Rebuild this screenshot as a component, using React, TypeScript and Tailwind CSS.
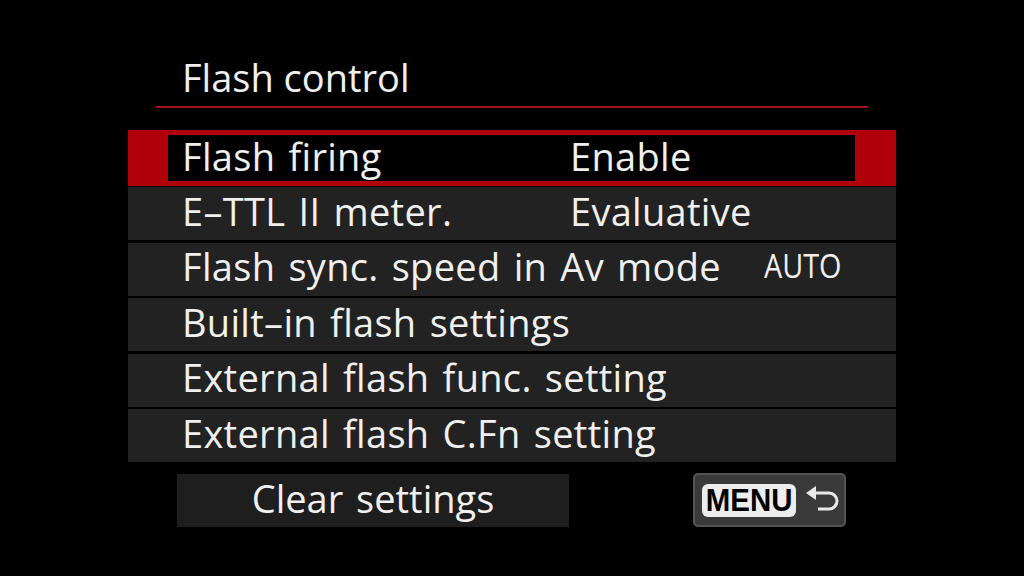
import { ReactNode } from 'react';

interface MenuRow {
    label: string;
    value?: string;
    small?: boolean;
}

const ROWS: MenuRow[] = [
    { label: 'E\u2013TTL II meter.', value: 'Evaluative' },
    { label: 'Flash sync. speed in Av mode', value: 'AUTO', small: true },
    { label: 'Built\u2013in flash settings' },
    { label: 'External flash func. setting' },
    { label: 'External flash C.Fn setting' },
];

const FONT = { fontFamily: '"Open Sans", "Noto Sans", sans-serif' };

const ReturnIcon = () => (
    <svg width="36" height="28" viewBox="0 0 36 28" className="text-[#e8e8e8]">
        <path d="M1 7 L11 0 L11 14 Z" fill="currentColor" />
        <path d="M10 7 H24 a8 8 0 0 1 0 16 H13" fill="none" stroke="currentColor" strokeWidth="3" />
    </svg>
);

const Row = ({ children }: { children: ReactNode }) => (
    <div className="h-[53px] bg-[#222222] flex items-center pl-[54px] pb-[6px] whitespace-nowrap tracking-[0.3px] [word-spacing:3px]">
        {children}
    </div>
);

export default function App() {
    return (
        <div
            className="w-[1024px] h-[576px] bg-black text-[#f0f0f0] text-[38px] leading-none overflow-hidden"
            style={FONT}
        >
            <div className="pt-[58px] pl-[156px] w-[868px]">
                <div className="pl-[26px] pb-[10px]">Flash control</div>
                <div className="h-[2px] bg-[#a3121a]" />
            </div>

            <div className="ml-[128px] w-[768px] mt-[22px] flex flex-col">
                <div className="h-[56px] bg-[#b0000c] flex pl-[40px] py-[5px] pr-[41px]">
                    <div className="flex-1 bg-black flex items-center pl-[14px] pb-[5px] whitespace-nowrap tracking-[0.3px] [word-spacing:3px]">
                        <span className="w-[388px] shrink-0">Flash firing</span>
                        <span>Enable</span>
                    </div>
                </div>
                <div className="mt-[1px] flex flex-col gap-[2.5px]">
                    {ROWS.map((row) => (
                        <Row key={row.label}>
                            <span className={row.small ? 'w-[582px] shrink-0' : 'w-[388px] shrink-0'}>{row.label}</span>
                            {row.value && (
                                row.small ? (
                                    <span className="inline-block origin-left scale-x-[0.9] text-[32px] tracking-normal">{row.value}</span>
                                ) : (
                                    <span>{row.value}</span>
                                )
                            )}
                        </Row>
                    ))}
                </div>
            </div>

            <div className="ml-[177px] mt-[12px] w-[669px] flex items-start justify-between">
                <div className="w-[392px] h-[53px] bg-[#1e1e1e] flex items-center justify-center pb-[6px] [word-spacing:3px]">
                    Clear settings
                </div>
                <div className="w-[153px] h-[54px] mt-[-1px] bg-[#3a3a3a] border-2 border-[#555555] rounded-[5px] flex items-center pl-[7px] gap-[9px]">
                    <div className="h-[33px] w-[94px] shrink-0 bg-[#ededed] rounded-[6px] flex items-center justify-center overflow-hidden">
                        <span
                            className="inline-block text-black font-bold text-[32px] scale-x-[0.92]"
                            style={{ fontFamily: '"Liberation Sans", Arial, sans-serif' }}
                        >
                            MENU
                        </span>
                    </div>
                    <ReturnIcon />
                </div>
            </div>
        </div>
    );
}
